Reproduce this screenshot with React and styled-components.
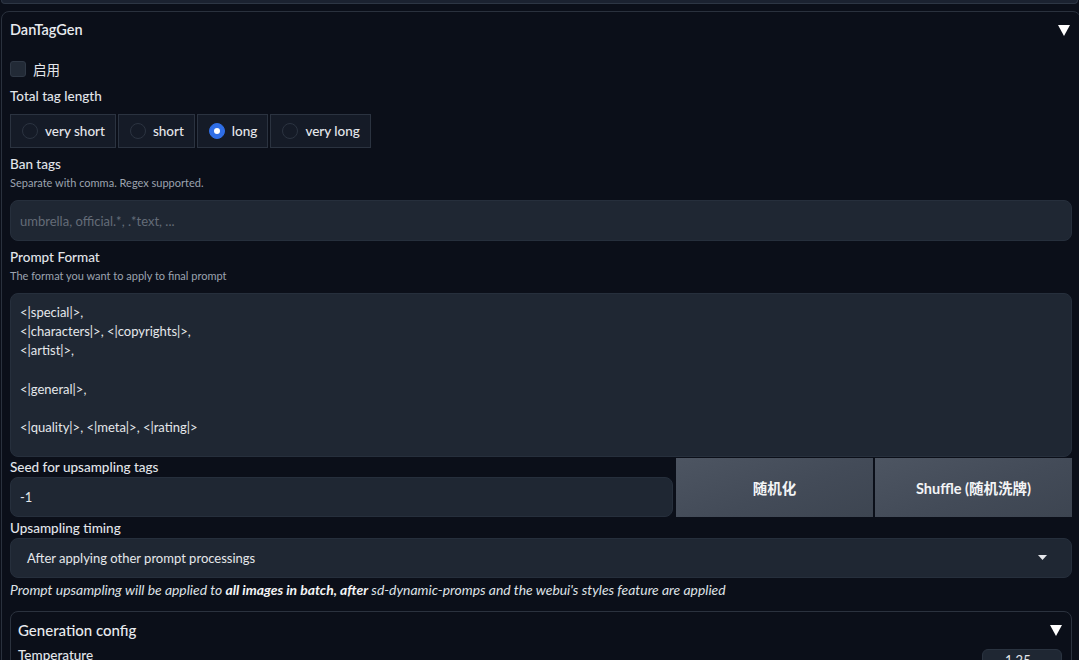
import React from "react";
import styled, { createGlobalStyle } from "styled-components";

const Global = createGlobalStyle`
  html, body { margin: 0; padding: 0; background: #0b0f19; overflow: hidden; }
  body { font-family: Lato, "Noto Sans CJK SC", sans-serif; color: #e5e7eb; width: 1079px; height: 660px; }
`;

const Page = styled.div`
  width: 1079px;
  height: 660px;
  overflow: hidden;
`;

const PrevPanelEdge = styled.div`
  height: 3px;
  margin: 0 1px;
  background: #1b2230;
  border: 1px solid #2d3644;
  border-top: none;
  border-radius: 0 0 8px 8px;
`;

const Panel = styled.section`
  margin: 7px 0 0 1px;
  width: 1080px;
  border: 1px solid #2a313d;
  border-radius: 8px;
  padding: 0 8px 0 8px;
  box-sizing: border-box;
  min-height: 700px;
`;

const PanelHeader = styled.div`
  display: flex;
  align-items: center;
  justify-content: space-between;
  margin-top: ${(p) => p.$top || 8}px;
  height: 20px;
  padding-right: ${(p) => p.$pr || 0}px;
`;

const Title = styled.span`
  font-size: ${(p) => p.$size || 14.5}px;
  font-weight: ${(p) => p.$weight || 600};
  color: #e8eaee;
  line-height: 20px;
`;

const Caret = ({ size = 12 }) => (
  <svg width={size} height={size - 1} viewBox="0 0 12 11">
    <polygon points="0,0 12,0 6,11" fill="#ffffff" />
  </svg>
);

const CheckRow = styled.label`
  display: flex;
  align-items: center;
  gap: 7px;
  margin-top: 21px;
  height: 16px;
  font-size: 13.5px;
`;

const CheckBox = styled.span`
  width: 14px;
  height: 14px;
  border-radius: 3px;
  background: #222a36;
  border: 1px solid #2f3845;
`;

const Label = styled.div`
  font-size: 13.5px;
  font-weight: 500;
  line-height: ${(p) => p.$lh || 20}px;
  margin-top: ${(p) => p.$mt || 0}px;
  color: #e2e5ea;
`;

const Info = styled.div`
  font-size: 11px;
  line-height: 16px;
  margin-top: 1px;
  color: #9ca3af;
`;

const RadioGroup = styled.div`
  display: flex;
  gap: 2px;
  margin-top: 8px;
  height: 34px;
`;

const RadioItem = styled.label`
  display: flex;
  align-items: center;
  gap: 7px;
  padding: 0 10px 0 11px;
  background: #151b27;
  border: 1px solid #2b3340;
  font-size: 13.5px;
  font-weight: 500;
  color: #e5e7eb;
`;

const RadioDot = styled.span`
  width: 16px;
  height: 16px;
  border-radius: 50%;
  box-sizing: border-box;
  background: ${(p) => (p.$on ? "#2f6ee6" : "#151b27")};
  border: 1px solid ${(p) => (p.$on ? "#2f6ee6" : "#2c3441")};
  display: flex;
  align-items: center;
  justify-content: center;
  &::after {
    content: "";
    display: ${(p) => (p.$on ? "block" : "none")};
    width: 6px;
    height: 6px;
    border-radius: 50%;
    background: #fff;
  }
`;

const TextInput = styled.div`
  margin-top: ${(p) => p.$mt || 0}px;
  height: ${(p) => p.$h || 41}px;
  box-sizing: border-box;
  background: #1f2733;
  border: 1px solid #262f3c;
  border-radius: 8px;
  padding: 0 ${(p) => p.$px || 9}px;
  display: flex;
  align-items: center;
  justify-content: space-between;
  font-size: 13px;
  color: ${(p) => (p.$placeholder ? "#646c78" : "#e5e7eb")};
`;

const TextArea = styled.div`
  margin-top: 9px;
  height: 164px;
  box-sizing: border-box;
  background: #1f2733;
  border: 1px solid #262f3c;
  border-radius: 8px;
  padding: 9px 9px;
  font-size: 13px;
  line-height: 19.2px;
  white-space: pre;
  color: #e5e7eb;
`;

const SeedRow = styled.div`
  display: grid;
  grid-template-columns: 1fr 197px 197px;
  column-gap: 2px;
  margin-top: 1px;
  height: 59px;
`;

const SeedCol = styled.div`
  display: flex;
  flex-direction: column;
  margin-right: 1px;
`;

const ActionButton = styled.button`
  border: none;
  margin: 0;
  background: linear-gradient(160deg, #4d5562 0%, #434b58 55%, #3d4551 100%);
  color: #f3f4f6;
  font-family: Lato, "Noto Sans CJK SC", sans-serif;
  font-size: 14.5px;
  font-weight: 700;
  height: 59px;
`;

const Note = styled.p`
  margin: 3px 0 0 0;
  font-size: 13.9px;
  line-height: 18px;
  font-style: italic;
  color: #dfe2e7;
  white-space: nowrap;
  b { font-weight: 700; color: #f3f4f6; }
`;

const SubPanel = styled.div`
  margin-top: 12px;
  width: 1062px;
  box-sizing: border-box;
  border: 1px solid #2b323e;
  border-radius: 8px;
  padding: 0 9px 0 7px;
  height: 80px;
`;

const SubRow = styled.div`
  display: flex;
  justify-content: space-between;
  align-items: flex-start;
  margin-top: 6px;
`;

const NumberBox = styled.div`
  margin-top: 3px;
  width: 80px;
  height: 30px;
  box-sizing: border-box;
  background: #1f2733;
  border: 1px solid #2a3340;
  border-radius: 6px;
  font-size: 13px;
  color: #e5e7eb;
  padding: 2px 0 0 22px;
`;

const prompt = `<|special|>,
<|characters|>, <|copyrights|>,
<|artist|>,

<|general|>,

<|quality|>, <|meta|>, <|rating|>`;

const lengths = ["very short", "short", "long", "very long"];

export default function App() {
  return (
    <Page>
      <Global />
      <PrevPanelEdge />
      <Panel>
        <PanelHeader $pr={2}>
          <Title>DanTagGen</Title>
          <Caret />
        </PanelHeader>
        <CheckRow>
          <CheckBox />
          <span>启用</span>
        </CheckRow>
        <Label $mt={9}>Total tag length</Label>
        <RadioGroup>
          {lengths.map((l) => (
            <RadioItem key={l}>
              <RadioDot $on={l === "long"} />
              {l}
            </RadioItem>
          ))}
        </RadioGroup>
        <Label $mt={6}>Ban tags</Label>
        <Info>Separate with comma. Regex supported.</Info>
        <TextInput $mt={9} $placeholder>
          umbrella, official.*, .*text, ...
        </TextInput>
        <Label $mt={6}>Prompt Format</Label>
        <Info>The format you want to apply to final prompt</Info>
        <TextArea>{prompt}</TextArea>
        <SeedRow>
          <SeedCol>
            <Label $lh={18}>Seed for upsampling tags</Label>
            <TextInput $mt={1} $h={40}>-1</TextInput>
          </SeedCol>
          <ActionButton>随机化</ActionButton>
          <ActionButton>Shuffle (随机洗牌)</ActionButton>
        </SeedRow>
        <Label $mt={1}>Upsampling timing</Label>
        <TextInput $h={40} $px={16}>
          <span>After applying other prompt processings</span>
          <svg width="9" height="6" viewBox="0 0 9 6" style={{ marginRight: 8 }}>
            <polygon points="0,0 9,0 4.5,5" fill="#e5e7eb" />
          </svg>
        </TextInput>
        <Note>
          Prompt upsampling will be applied to <b>all images in batch, after</b>{" "}
          sd-dynamic-promps and the webui's styles feature are applied
        </Note>
        <SubPanel>
          <PanelHeader>
            <Title $size={15} $weight={500}>Generation config</Title>
            <Caret />
          </PanelHeader>
          <SubRow>
            <Label $lh={18}>Temperature</Label>
            <NumberBox>1.25</NumberBox>
          </SubRow>
        </SubPanel>
      </Panel>
    </Page>
  );
}
